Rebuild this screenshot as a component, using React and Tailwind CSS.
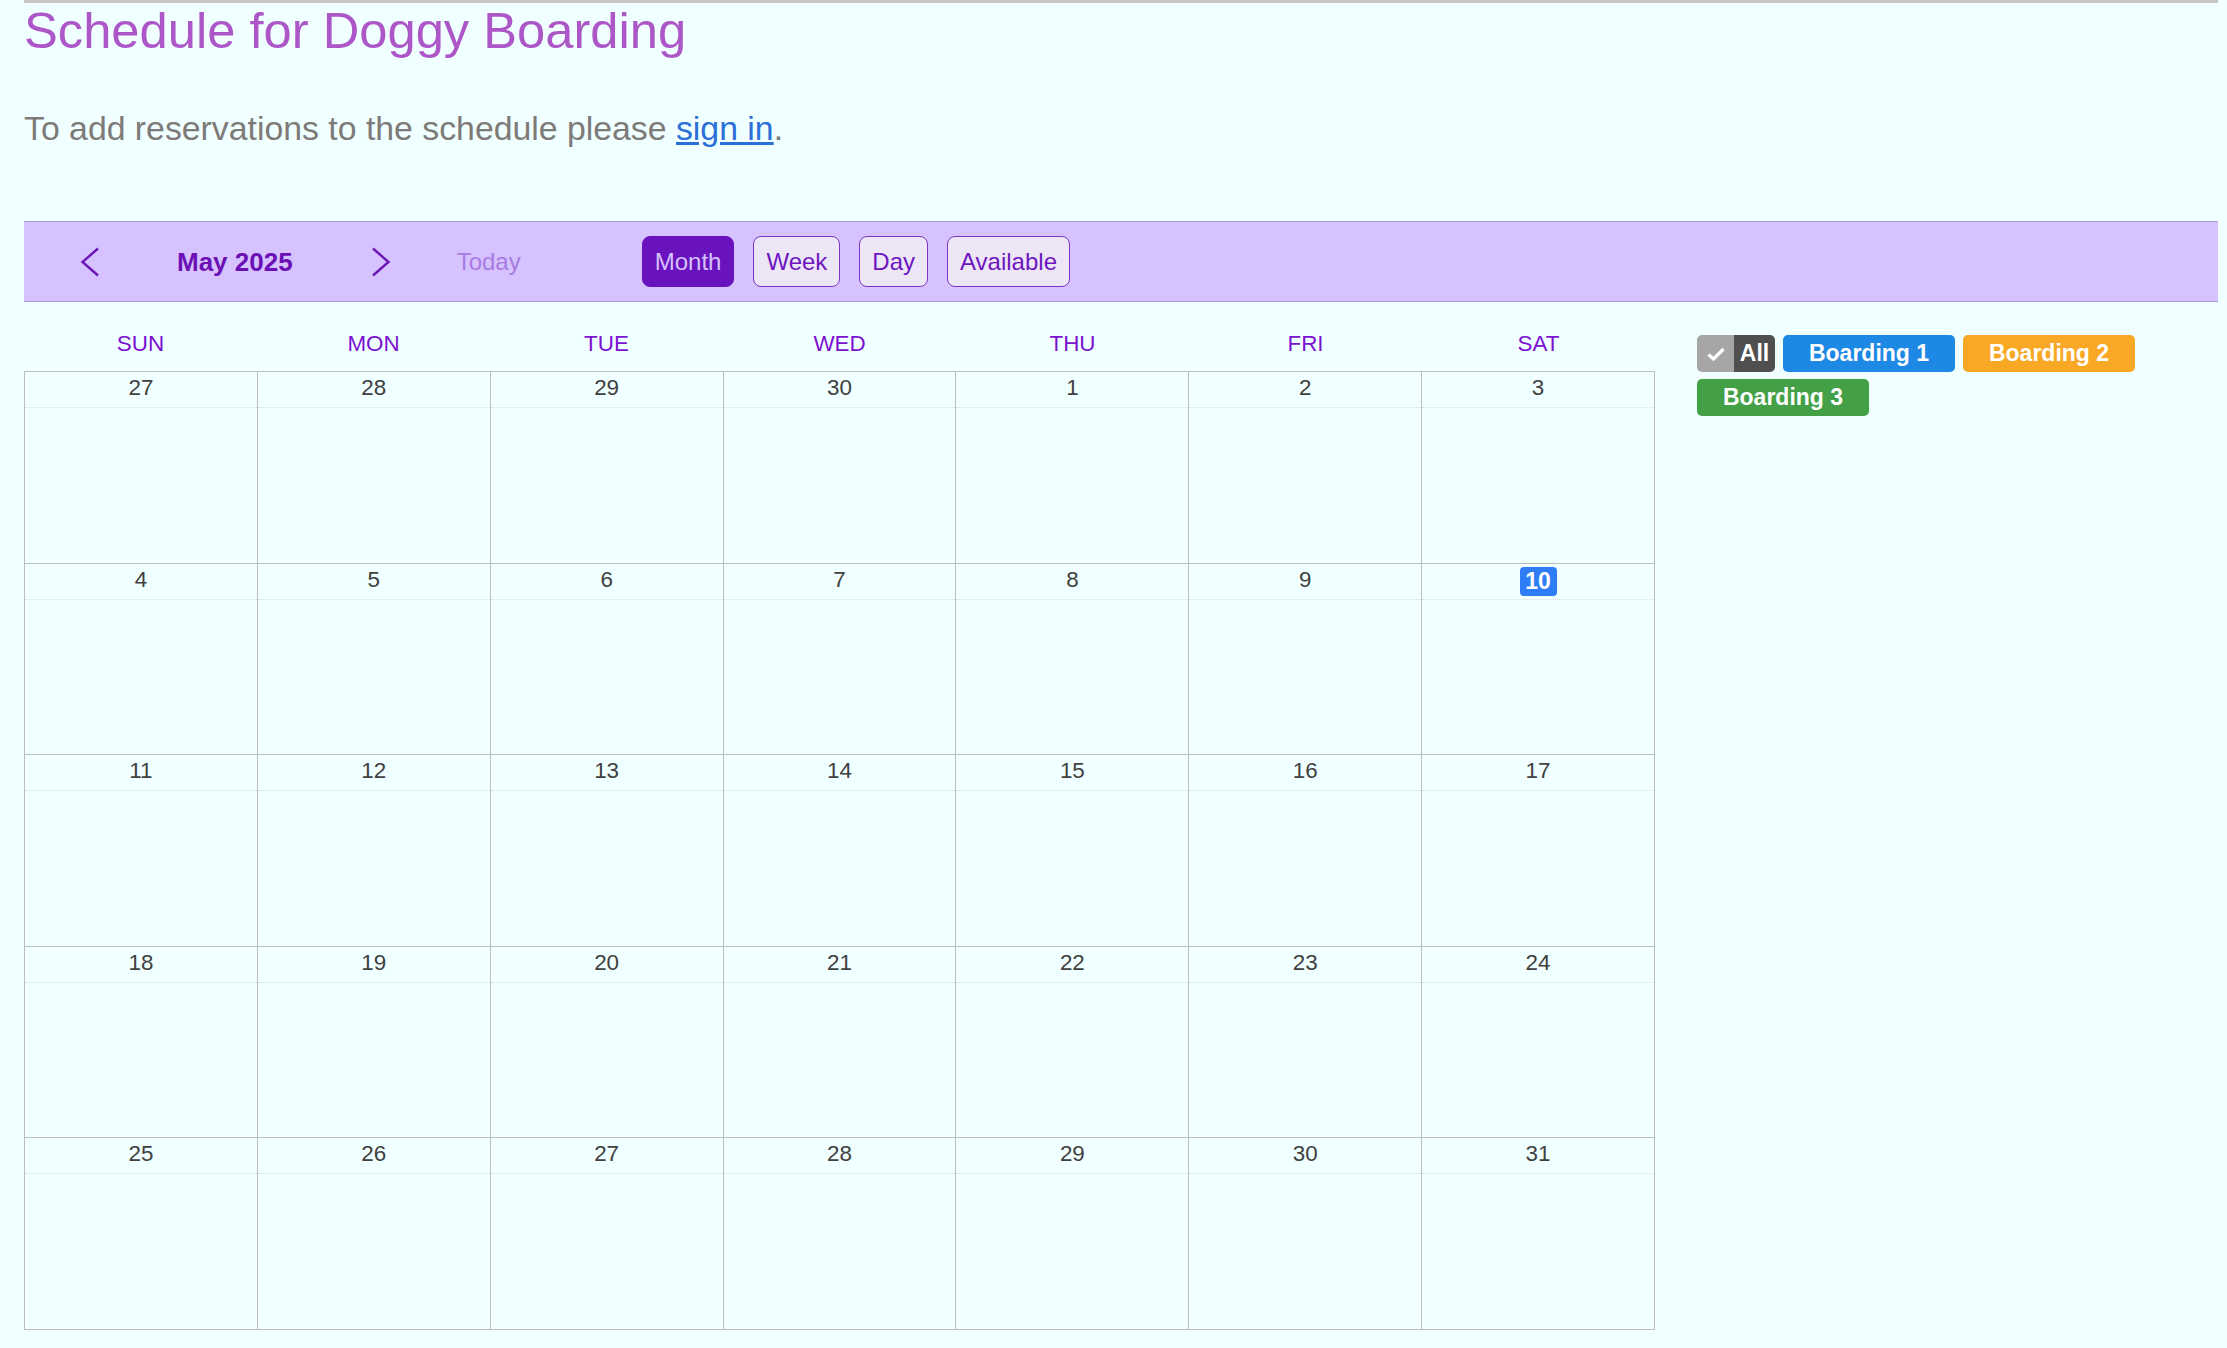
import React from "react";

const weeks = [
  [27, 28, 29, 30, 1, 2, 3],
  [4, 5, 6, 7, 8, 9, 10],
  [11, 12, 13, 14, 15, 16, 17],
  [18, 19, 20, 21, 22, 23, 24],
  [25, 26, 27, 28, 29, 30, 31],
];
const days = ["SUN", "MON", "TUE", "WED", "THU", "FRI", "SAT"];

function Chevron({ dir }) {
  return (
    <svg width="20" height="30" viewBox="0 0 20 30" className="shrink-0">
      <polyline
        points={dir === "left" ? "18,1.5 2.5,15 18,28.5" : "2,1.5 17.5,15 2,28.5"}
        fill="none"
        stroke="#6c16b6"
        strokeWidth="2.4"
        strokeLinejoin="miter"
      />
    </svg>
  );
}

export default function App() {
  return (
    <div className="min-h-screen w-full bg-[#f0ffff] font-['Liberation_Sans',Arial,sans-serif]">
      <div className="ml-[24px] mr-[9px] border-t-[3px] border-[#c8c6c6]">
        <h1 className="text-[50.7px] leading-[56px] text-[#ad56c8] font-normal">
          Schedule for Doggy Boarding
        </h1>
        <p className="mt-[50px] text-[33.8px] leading-[38px] text-[#7d7a78]">
          To add reservations to the schedule please{" "}
          <a href="#" className="text-[#2b6fd8] underline">
            sign in
          </a>
          .
        </p>

        {/* Toolbar */}
        <div className="mt-[74px] h-[81px] flex items-center bg-[#d6c2ff] border-y-[1.5px] border-[#a99bd6] pl-[56px]">
          <Chevron dir="left" />
          <span className="ml-[77px] text-[26px] font-bold text-[#6b10b4] leading-none">
            May 2025
          </span>
          <span className="ml-[78px]">
            <Chevron dir="right" />
          </span>
          <span className="ml-[66px] text-[24px] text-[#a87be2] leading-none">Today</span>
          <div className="ml-[121px] flex items-center gap-[19px]">
            <button className="h-[51px] px-[12px] rounded-[8px] border-[1.5px] border-[#6913be] bg-[#6913be] text-[24px] text-[#d6c0fd]">
              Month
            </button>
            <button className="h-[51px] px-[12px] rounded-[8px] border-[1.5px] border-[#7a35c4] bg-[#ede6f6] text-[24px] text-[#6d16c0]">
              Week
            </button>
            <button className="h-[51px] px-[12px] rounded-[8px] border-[1.5px] border-[#7a35c4] bg-[#ede6f6] text-[24px] text-[#6d16c0]">
              Day
            </button>
            <button className="h-[51px] px-[12px] rounded-[8px] border-[1.5px] border-[#7a35c4] bg-[#ede6f6] text-[24px] text-[#6d16c0]">
              Available
            </button>
          </div>
        </div>

        {/* Calendar + legend */}
        <div className="flex">
          <div className="w-[1631px] shrink-0">
            <div className="grid grid-cols-7 h-[69px] pt-[29px]">
              {days.map((d) => (
                <div key={d} className="text-center text-[22.4px] leading-[26px] text-[#7b12cf]">
                  {d}
                </div>
              ))}
            </div>
            <div className="grid grid-cols-7 border-l border-t border-[#bdbdbd]">
              {weeks.flat().map((n, i) => (
                <div key={i} className="h-[191.5px] border-r border-b border-[#bdbdbd]">
                  <div className="h-[36px] border-b border-dotted border-[#dcdcdc] flex justify-center pt-[3px]">
                    {n === 10 && i === 13 ? (
                      <span className="h-[29px] w-[37px] rounded-[4px] bg-[#2f7df6] text-white font-bold text-[23px] leading-[29px] text-center">
                        10
                      </span>
                    ) : (
                      <span className="text-[22.4px] leading-[26px] text-[#404040]">{n}</span>
                    )}
                  </div>
                </div>
              ))}
            </div>
          </div>

          <div className="ml-[42px] mt-[33px] flex flex-wrap content-start gap-x-[8px] gap-y-[7px] w-[521px]">
            <div className="flex h-[37px] rounded-[5px] overflow-hidden">
              <div className="w-[37px] bg-[#a6a6a6] flex items-center justify-center">
                <svg width="20" height="16" viewBox="0 0 20 16">
                  <polyline
                    points="2.5,8.5 7.5,13 17.5,3"
                    fill="none"
                    stroke="white"
                    strokeWidth="3.2"
                  />
                </svg>
              </div>
              <div className="w-[41px] bg-[#4f4f4f] flex items-center justify-center text-white font-bold text-[23px]">
                All
              </div>
            </div>
            <div className="w-[172px] h-[37px] rounded-[5px] bg-[#1e88e5] flex items-center justify-center text-white font-bold text-[23px]">
              Boarding 1
            </div>
            <div className="w-[172px] h-[37px] rounded-[5px] bg-[#f9a825] flex items-center justify-center text-white font-bold text-[23px]">
              Boarding 2
            </div>
            <div className="w-[172px] h-[37px] rounded-[5px] bg-[#43a047] flex items-center justify-center text-white font-bold text-[23px]">
              Boarding 3
            </div>
          </div>
        </div>
      </div>
    </div>
  );
}
